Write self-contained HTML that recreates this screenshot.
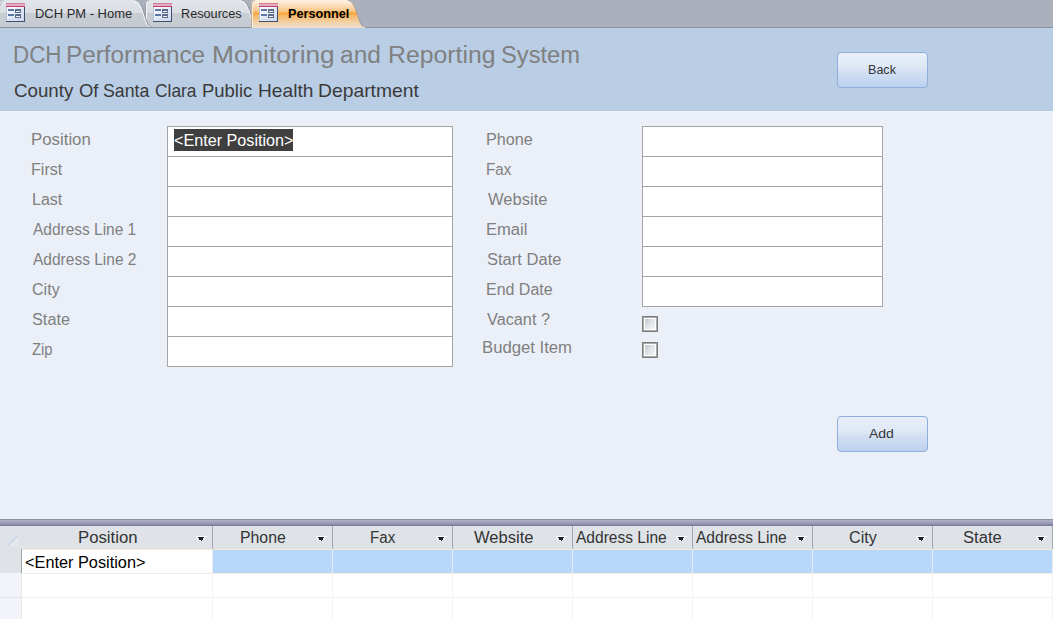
<!DOCTYPE html>
<html><head><meta charset="utf-8"><style>
html,body{margin:0;padding:0;}
body{width:1053px;height:619px;overflow:hidden;position:relative;background:#ebf0f8;font-family:"Liberation Sans",sans-serif;}
.a{position:absolute;}
.t{position:absolute;white-space:nowrap;transform-origin:0 0;}
</style></head><body>
<svg class="a" style="left:0;top:0" width="1053" height="28" viewBox="0 0 1053 28">
<defs>
<linearGradient id="gi" x1="0" y1="0" x2="0" y2="1">
<stop offset="0" stop-color="#e2e5e9"/><stop offset="0.46" stop-color="#dadde2"/>
<stop offset="0.47" stop-color="#c8ccd3"/><stop offset="1" stop-color="#c6cad1"/>
</linearGradient>
<linearGradient id="ga" x1="0" y1="0" x2="0" y2="1">
<stop offset="0" stop-color="#fcf0e2"/><stop offset="0.1" stop-color="#fce8d2"/>
<stop offset="0.4" stop-color="#f9c585"/><stop offset="0.48" stop-color="#f7a63a"/>
<stop offset="0.56" stop-color="#f6b868"/><stop offset="0.8" stop-color="#f1d2a8"/>
<stop offset="1" stop-color="#ece1cf"/>
</linearGradient>
<linearGradient id="gic" x1="0" y1="0" x2="1" y2="1">
<stop offset="0" stop-color="#ffffff"/><stop offset="1" stop-color="#c9d6f0"/>
</linearGradient>

</defs>
<rect x="0" y="0" width="1053" height="27" fill="#aab1bd"/>
<rect x="0" y="27" width="1053" height="1" fill="#8b919b"/>
<!-- tab 2 -->
<path d="M145,28 L145,3.5 Q145,0 149,0 L242,0 C246,0 248,5 250.5,13 C253,21 255,27.5 260,27.5 L260,28 Z" fill="url(#gi)"/>
<path d="M145.5,27 L145.5,4 Q145.5,0.5 149,0.5" fill="none" stroke="#979da6" stroke-width="1"/>
<path d="M146.5,27 L146.5,4 Q146.5,1.5 150,1.5" fill="none" stroke="#f2f4f6" stroke-width="1"/>
<path d="M242,0.5 C246,0.5 248,5.5 250.5,13 C253,21 255,27.5 260,27.5" fill="none" stroke="#8c939d" stroke-width="1"/>
<path d="M241,1.5 C245,1.5 247,6 249.5,13 C252,20 253,26 255,27" fill="none" stroke="#f4f5f7" stroke-width="1"/>
<!-- tab 1 -->
<path d="M0,28 L0,3 Q0,0 3,0 L135.5,0 C139.5,0 141.5,5 144,13 C146.5,21 148,27.5 153,27.5 L153,28 Z" fill="url(#gi)"/>
<path d="M0.5,6 Q0.5,0.5 4,0.5" fill="none" stroke="#b9bfc8" stroke-width="1"/>
<path d="M135.5,0.5 C139.5,0.5 141.5,5.5 144,13 C146.5,21 148,27.5 153,27.5" fill="none" stroke="#8c939d" stroke-width="1"/>
<path d="M134.5,1.5 C138.5,1.5 140.5,6 143,13.5 C145.5,21 146.5,26.5 150,27" fill="none" stroke="#f6f7f9" stroke-width="1"/>
<rect x="0" y="27" width="260" height="1" fill="#8b919b"/>
<!-- tab 3 active -->
<path d="M251,28 L251,3.5 Q251,0 255,0 L348,0 C352,0 354.5,5 357,13 C359.5,21 361,27.5 366,27.5 L366,28 Z" fill="url(#ga)"/>
<path d="M251.5,28 L251.5,4 Q251.5,0.5 255,0.5" fill="none" stroke="#b9ab98" stroke-width="1"/>
<path d="M348,0.5 C352,0.5 354.5,5.5 357,13 C359.5,21 361,27.5 366,27.5" fill="none" stroke="#9c9a98" stroke-width="1"/>
<path d="M252.5,27 L252.5,4 Q252.5,1.5 256,1.5" fill="none" stroke="#fbeedd" stroke-width="1"/>
<rect x="252" y="27" width="113" height="1" fill="#ebdfcc"/>
<g transform="translate(6,3)">
<rect x="0" y="4" width="19" height="15" fill="#3e506e"/>
<rect x="0" y="4" width="18" height="14" fill="#b9c4d6"/>
<rect x="1" y="4" width="17" height="14" fill="url(#gic)"/>
<rect x="0" y="0" width="19" height="1" fill="#d27f9f"/>
<rect x="0" y="1" width="19" height="2" fill="#e3adc0"/>
<rect x="0" y="3" width="19" height="1" fill="#c43f6e"/>
<rect x="2" y="6" width="6" height="2" fill="#5b76a7"/>
<rect x="9" y="6" width="6" height="4" fill="#5d6e8c"/>
<rect x="10" y="8" width="4" height="1" fill="#eef1f6"/>
<rect x="2" y="11" width="6" height="2" fill="#5b76a7"/>
<rect x="9" y="11" width="6" height="4" fill="#5d6e8c"/>
<rect x="10" y="13" width="4" height="1" fill="#eef1f6"/>
<rect x="2" y="16" width="14" height="1" fill="#d5dbe6"/>
</g>
<g transform="translate(153,3)">
<rect x="0" y="4" width="19" height="15" fill="#3e506e"/>
<rect x="0" y="4" width="18" height="14" fill="#b9c4d6"/>
<rect x="1" y="4" width="17" height="14" fill="url(#gic)"/>
<rect x="0" y="0" width="19" height="1" fill="#d27f9f"/>
<rect x="0" y="1" width="19" height="2" fill="#e3adc0"/>
<rect x="0" y="3" width="19" height="1" fill="#c43f6e"/>
<rect x="2" y="6" width="6" height="2" fill="#5b76a7"/>
<rect x="9" y="6" width="6" height="4" fill="#5d6e8c"/>
<rect x="10" y="8" width="4" height="1" fill="#eef1f6"/>
<rect x="2" y="11" width="6" height="2" fill="#5b76a7"/>
<rect x="9" y="11" width="6" height="4" fill="#5d6e8c"/>
<rect x="10" y="13" width="4" height="1" fill="#eef1f6"/>
<rect x="2" y="16" width="14" height="1" fill="#d5dbe6"/>
</g>
<g transform="translate(259,3)">
<rect x="0" y="4" width="19" height="15" fill="#3e506e"/>
<rect x="0" y="4" width="18" height="14" fill="#b9c4d6"/>
<rect x="1" y="4" width="17" height="14" fill="url(#gic)"/>
<rect x="0" y="0" width="19" height="1" fill="#d27f9f"/>
<rect x="0" y="1" width="19" height="2" fill="#e3adc0"/>
<rect x="0" y="3" width="19" height="1" fill="#c43f6e"/>
<rect x="2" y="6" width="6" height="2" fill="#5b76a7"/>
<rect x="9" y="6" width="6" height="4" fill="#5d6e8c"/>
<rect x="10" y="8" width="4" height="1" fill="#eef1f6"/>
<rect x="2" y="11" width="6" height="2" fill="#5b76a7"/>
<rect x="9" y="11" width="6" height="4" fill="#5d6e8c"/>
<rect x="10" y="13" width="4" height="1" fill="#eef1f6"/>
<rect x="2" y="16" width="14" height="1" fill="#d5dbe6"/>
</g>
</svg>
<!-- form header -->
<div class="a" style="left:0;top:28px;width:1053px;height:82px;background:#b9cde5"></div>
<div class="a" style="left:0;top:110px;width:1053px;height:1px;background:#b3c8e2"></div>
<div class="a" style="left:0;top:111px;width:1053px;height:1px;background:#f1f4fa"></div>
<!-- detail -->
<div class="a" style="left:0;top:112px;width:1053px;height:407px;background:#ebf0f8"></div>
<!-- buttons -->
<div class="a" style="left:837px;top:52px;width:89px;height:34px;border:1px solid #8eaedb;border-radius:4px;background:linear-gradient(#e9eff9,#dfe8f6 40%,#d0def3 60%,#bcd1ef)"></div>
<div class="a" style="left:837px;top:416px;width:89px;height:34px;border:1px solid #8eaedb;border-radius:4px;background:linear-gradient(#e9eff9,#dfe8f6 40%,#d0def3 60%,#bcd1ef)"></div>
<!-- left textboxes -->
<div class="a" style="left:167px;top:126px;width:284px;height:239px;border:1px solid #a5a5a5;background:#fff"></div>
<div class="a" style="left:168px;top:156px;width:284px;height:1px;background:#a5a5a5"></div>
<div class="a" style="left:168px;top:186px;width:284px;height:1px;background:#a5a5a5"></div>
<div class="a" style="left:168px;top:216px;width:284px;height:1px;background:#a5a5a5"></div>
<div class="a" style="left:168px;top:246px;width:284px;height:1px;background:#a5a5a5"></div>
<div class="a" style="left:168px;top:276px;width:284px;height:1px;background:#a5a5a5"></div>
<div class="a" style="left:168px;top:306px;width:284px;height:1px;background:#a5a5a5"></div>
<div class="a" style="left:168px;top:336px;width:284px;height:1px;background:#a5a5a5"></div>
<div class="a" style="left:174px;top:129px;width:119px;height:22px;background:#3f3f3f"></div>
<!-- right textboxes -->
<div class="a" style="left:642px;top:126px;width:239px;height:179px;border:1px solid #a5a5a5;background:#fff"></div>
<div class="a" style="left:643px;top:156px;width:239px;height:1px;background:#a5a5a5"></div>
<div class="a" style="left:643px;top:186px;width:239px;height:1px;background:#a5a5a5"></div>
<div class="a" style="left:643px;top:216px;width:239px;height:1px;background:#a5a5a5"></div>
<div class="a" style="left:643px;top:246px;width:239px;height:1px;background:#a5a5a5"></div>
<div class="a" style="left:643px;top:276px;width:239px;height:1px;background:#a5a5a5"></div>
<!-- checkboxes -->
<div class="a" style="left:642px;top:316px;width:14px;height:14px;border:1px solid #7c7c7c;box-shadow:inset 0 0 0 1px #a9a9a9;background:#fff"></div>
<div class="a" style="left:645px;top:319px;width:10px;height:10px;background:linear-gradient(135deg,#bfc4cb,#dfe2e6 45%,#f4f5f6)"></div>
<div class="a" style="left:642px;top:342px;width:14px;height:14px;border:1px solid #7c7c7c;box-shadow:inset 0 0 0 1px #a9a9a9;background:#fff"></div>
<div class="a" style="left:645px;top:345px;width:10px;height:10px;background:linear-gradient(135deg,#bfc4cb,#dfe2e6 45%,#f4f5f6)"></div>
<!-- datasheet -->
<div class="a" style="left:0;top:519px;width:1053px;height:1px;background:#8d9097"></div>
<div class="a" style="left:0;top:520px;width:1053px;height:6px;background:linear-gradient(#aeb0c6,#9c9eb8 50%,#78799a)"></div>
<div class="a" style="left:0;top:526px;width:1053px;height:93px;background:#fff"></div>
<div class="a" style="left:0;top:526px;width:1053px;height:23px;background:#dfe3e8"></div>
<div class="a" style="left:0;top:549px;width:21px;height:24px;background:#dfe3e8"></div>
<div class="a" style="left:0;top:573px;width:21px;height:46px;background:#f2f4fa"></div>
<div class="a" style="left:0;top:597px;width:21px;height:1px;background:#e1e4ea"></div>
<div class="a" style="left:21px;top:549px;width:1px;height:24px;background:#a0a4ab"></div>
<div class="a" style="left:21px;top:573px;width:1px;height:46px;background:#e6e8ec"></div>
<div class="a" style="left:213px;top:550px;width:840px;height:23px;background:#b7d8fb"></div>
<div class="a" style="left:22px;top:549px;width:1031px;height:1px;background:#f2ead8"></div>
<div class="a" style="left:22px;top:573px;width:1031px;height:1px;background:#efebdf"></div>
<div class="a" style="left:22px;top:597px;width:1031px;height:1px;background:#f3f1e9"></div>
<svg class="a" style="left:0;top:526px" width="1053" height="93" viewBox="0 0 1053 93">
<path d="M7,20 L18,9 L18,20 Z" fill="#e6e9ee"/>
<path d="M7.5,20 L18,9.5" stroke="#a9c3ea" stroke-width="1"/>
<g fill="#a3a7ae">
<rect x="212" y="0" width="1" height="23"/><rect x="332" y="0" width="1" height="23"/><rect x="452" y="0" width="1" height="23"/>
<rect x="572" y="0" width="1" height="23"/><rect x="692" y="0" width="1" height="23"/><rect x="812" y="0" width="1" height="23"/>
<rect x="932" y="0" width="1" height="23"/><rect x="1052" y="0" width="1" height="23"/>
</g>
<g fill="#f6f4ee">
<rect x="212" y="47" width="1" height="46"/><rect x="332" y="47" width="1" height="46"/><rect x="452" y="47" width="1" height="46"/>
<rect x="572" y="47" width="1" height="46"/><rect x="692" y="47" width="1" height="46"/><rect x="812" y="47" width="1" height="46"/>
<rect x="932" y="47" width="1" height="46"/><rect x="1052" y="47" width="1" height="46"/>
</g>
<g fill="#e8ecf5">
<rect x="212" y="24" width="1" height="23"/><rect x="332" y="24" width="1" height="23"/><rect x="452" y="24" width="1" height="23"/>
<rect x="572" y="24" width="1" height="23"/><rect x="692" y="24" width="1" height="23"/><rect x="812" y="24" width="1" height="23"/>
<rect x="932" y="24" width="1" height="23"/><rect x="1052" y="24" width="1" height="23"/>
</g>
<g fill="#ffffff" opacity="0.9"><rect x="196" y="10" width="11" height="1"/><rect x="197" y="11" width="1" height="3"/><rect x="204" y="11" width="1" height="3"/><rect x="199" y="14" width="4" height="1"/><rect x="201" y="15" width="1" height="1"/><rect x="316" y="10" width="11" height="1"/><rect x="317" y="11" width="1" height="3"/><rect x="324" y="11" width="1" height="3"/><rect x="319" y="14" width="4" height="1"/><rect x="321" y="15" width="1" height="1"/><rect x="436" y="10" width="11" height="1"/><rect x="437" y="11" width="1" height="3"/><rect x="444" y="11" width="1" height="3"/><rect x="439" y="14" width="4" height="1"/><rect x="441" y="15" width="1" height="1"/><rect x="556" y="10" width="11" height="1"/><rect x="557" y="11" width="1" height="3"/><rect x="564" y="11" width="1" height="3"/><rect x="559" y="14" width="4" height="1"/><rect x="561" y="15" width="1" height="1"/><rect x="676" y="10" width="11" height="1"/><rect x="677" y="11" width="1" height="3"/><rect x="684" y="11" width="1" height="3"/><rect x="679" y="14" width="4" height="1"/><rect x="681" y="15" width="1" height="1"/><rect x="796" y="10" width="11" height="1"/><rect x="797" y="11" width="1" height="3"/><rect x="804" y="11" width="1" height="3"/><rect x="799" y="14" width="4" height="1"/><rect x="801" y="15" width="1" height="1"/><rect x="916" y="10" width="11" height="1"/><rect x="917" y="11" width="1" height="3"/><rect x="924" y="11" width="1" height="3"/><rect x="919" y="14" width="4" height="1"/><rect x="921" y="15" width="1" height="1"/><rect x="1036" y="10" width="11" height="1"/><rect x="1037" y="11" width="1" height="3"/><rect x="1044" y="11" width="1" height="3"/><rect x="1039" y="14" width="4" height="1"/><rect x="1041" y="15" width="1" height="1"/></g><g fill="#1a2330"><rect x="198" y="11" width="6" height="1"/><rect x="199" y="12" width="4" height="2"/><rect x="201" y="14" width="1" height="1"/><rect x="318" y="11" width="6" height="1"/><rect x="319" y="12" width="4" height="2"/><rect x="321" y="14" width="1" height="1"/><rect x="438" y="11" width="6" height="1"/><rect x="439" y="12" width="4" height="2"/><rect x="441" y="14" width="1" height="1"/><rect x="558" y="11" width="6" height="1"/><rect x="559" y="12" width="4" height="2"/><rect x="561" y="14" width="1" height="1"/><rect x="678" y="11" width="6" height="1"/><rect x="679" y="12" width="4" height="2"/><rect x="681" y="14" width="1" height="1"/><rect x="798" y="11" width="6" height="1"/><rect x="799" y="12" width="4" height="2"/><rect x="801" y="14" width="1" height="1"/><rect x="918" y="11" width="6" height="1"/><rect x="919" y="12" width="4" height="2"/><rect x="921" y="14" width="1" height="1"/><rect x="1038" y="11" width="6" height="1"/><rect x="1039" y="12" width="4" height="2"/><rect x="1041" y="14" width="1" height="1"/></g>
</svg>

<span class="t" style="left:34.52px;top:6px;font-size:13.2px;line-height:15px;color:#2b2b2b;font-weight:normal;transform:scaleX(0.9819)">DCH PM - Home</span>
<span class="t" style="left:181.24px;top:6px;font-size:13.2px;line-height:15px;color:#2b2b2b;font-weight:normal;transform:scaleX(0.9612)">Resources</span>
<span class="t" style="left:287.86px;top:6px;font-size:13.6px;line-height:15px;color:#000000;font-weight:bold;transform:scaleX(0.9331)">Personnel</span>
<span class="t" style="left:12.98px;top:41px;font-size:24.7px;line-height:27px;color:#808080;font-weight:normal;transform:scaleX(0.9077)">DCH</span>
<span class="t" style="left:66.43px;top:41px;font-size:24.7px;line-height:27px;color:#808080;font-weight:normal;transform:scaleX(0.9844)">Performance</span>
<span class="t" style="left:211.57px;top:41px;font-size:24.7px;line-height:27px;color:#808080;font-weight:normal;transform:scaleX(1.0645)">Monitoring</span>
<span class="t" style="left:340.31px;top:41px;font-size:24.7px;line-height:27px;color:#808080;font-weight:normal;transform:scaleX(0.9929)">and</span>
<span class="t" style="left:387.69px;top:41px;font-size:24.7px;line-height:27px;color:#808080;font-weight:normal;transform:scaleX(1.0042)">Reporting</span>
<span class="t" style="left:500.64px;top:41px;font-size:24.7px;line-height:27px;color:#808080;font-weight:normal;transform:scaleX(0.9602)">System</span>
<span class="t" style="left:13.78px;top:80px;font-size:18.4px;line-height:21px;color:#3a3a3a;font-weight:normal;transform:scaleX(1.0174)">County</span>
<span class="t" style="left:78.60px;top:80px;font-size:18.4px;line-height:21px;color:#3a3a3a;font-weight:normal;transform:scaleX(1.0047)">Of</span>
<span class="t" style="left:102.63px;top:80px;font-size:18.4px;line-height:21px;color:#3a3a3a;font-weight:normal;transform:scaleX(0.9630)">Santa</span>
<span class="t" style="left:154.85px;top:80px;font-size:18.4px;line-height:21px;color:#3a3a3a;font-weight:normal;transform:scaleX(0.9435)">Clara</span>
<span class="t" style="left:202.29px;top:80px;font-size:18.4px;line-height:21px;color:#3a3a3a;font-weight:normal;transform:scaleX(1.0038)">Public</span>
<span class="t" style="left:257.54px;top:80px;font-size:18.4px;line-height:21px;color:#3a3a3a;font-weight:normal;transform:scaleX(1.0424)">Health</span>
<span class="t" style="left:317.53px;top:80px;font-size:18.4px;line-height:21px;color:#3a3a3a;font-weight:normal;transform:scaleX(1.0495)">Department</span>
<span class="t" style="left:867.77px;top:62px;font-size:13.4px;line-height:15px;color:#353535;font-weight:normal;transform:scaleX(0.9378)">Back</span>
<span class="t" style="left:869.20px;top:426px;font-size:13.4px;line-height:15px;color:#353535;font-weight:normal;transform:scaleX(1.0439)">Add</span>
<span class="t" style="left:31.43px;top:131px;font-size:16px;line-height:17px;color:#7f7f7f;font-weight:normal;transform:scaleX(1.0508)">Position</span>
<span class="t" style="left:31.49px;top:161px;font-size:16px;line-height:17px;color:#7f7f7f;font-weight:normal;transform:scaleX(1.0082)">First</span>
<span class="t" style="left:31.50px;top:191px;font-size:16px;line-height:17px;color:#7f7f7f;font-weight:normal;transform:scaleX(1.0001)">Last</span>
<span class="t" style="left:32.80px;top:221px;font-size:16px;line-height:17px;color:#7f7f7f;font-weight:normal;transform:scaleX(0.9667)">Address Line 1</span>
<span class="t" style="left:32.80px;top:251px;font-size:16px;line-height:17px;color:#7f7f7f;font-weight:normal;transform:scaleX(0.9695)">Address Line 2</span>
<span class="t" style="left:32.00px;top:281px;font-size:16px;line-height:17px;color:#7f7f7f;font-weight:normal;transform:scaleX(1.0054)">City</span>
<span class="t" style="left:32.09px;top:311px;font-size:16px;line-height:17px;color:#7f7f7f;font-weight:normal;transform:scaleX(1.0178)">State</span>
<span class="t" style="left:32.34px;top:341px;font-size:16px;line-height:17px;color:#7f7f7f;font-weight:normal;transform:scaleX(0.9277)">Zip</span>
<span class="t" style="left:486.18px;top:131px;font-size:16px;line-height:17px;color:#7f7f7f;font-weight:normal;transform:scaleX(1.0120)">Phone</span>
<span class="t" style="left:486.27px;top:161px;font-size:16px;line-height:17px;color:#7f7f7f;font-weight:normal;transform:scaleX(0.9457)">Fax</span>
<span class="t" style="left:487.50px;top:191px;font-size:16px;line-height:17px;color:#7f7f7f;font-weight:normal;transform:scaleX(1.0350)">Website</span>
<span class="t" style="left:486.15px;top:221px;font-size:16px;line-height:17px;color:#7f7f7f;font-weight:normal;transform:scaleX(1.0358)">Email</span>
<span class="t" style="left:486.78px;top:251px;font-size:16px;line-height:17px;color:#7f7f7f;font-weight:normal;transform:scaleX(1.0335)">Start Date</span>
<span class="t" style="left:486.20px;top:281px;font-size:16px;line-height:17px;color:#7f7f7f;font-weight:normal;transform:scaleX(0.9983)">End Date</span>
<span class="t" style="left:487.30px;top:311px;font-size:16px;line-height:17px;color:#7f7f7f;font-weight:normal;transform:scaleX(1.0168)">Vacant ?</span>
<span class="t" style="left:482.44px;top:339px;font-size:16px;line-height:17px;color:#7f7f7f;font-weight:normal;transform:scaleX(1.0435)">Budget Item</span>
<span class="t" style="left:173.79px;top:132px;font-size:16px;line-height:17px;color:#ffffff;font-weight:normal;transform:scaleX(1.0098)">&lt;Enter Position&gt;</span>
<span class="t" style="left:77.84px;top:529px;font-size:16px;line-height:17px;color:#333333;font-weight:normal;transform:scaleX(1.0472)">Position</span>
<span class="t" style="left:239.71px;top:529px;font-size:16px;line-height:17px;color:#333333;font-weight:normal;transform:scaleX(0.9894)">Phone</span>
<span class="t" style="left:370.47px;top:529px;font-size:16px;line-height:17px;color:#333333;font-weight:normal;transform:scaleX(0.9457)">Fax</span>
<span class="t" style="left:473.50px;top:529px;font-size:16px;line-height:17px;color:#333333;font-weight:normal;transform:scaleX(1.0350)">Website</span>
<span class="t" style="left:576.10px;top:529px;font-size:16px;line-height:17px;color:#333333;font-weight:normal;transform:scaleX(0.9710)">Address Line</span>
<span class="t" style="left:696.20px;top:529px;font-size:16px;line-height:17px;color:#333333;font-weight:normal;transform:scaleX(0.9710)">Address Line</span>
<span class="t" style="left:848.99px;top:529px;font-size:16px;line-height:17px;color:#333333;font-weight:normal;transform:scaleX(1.0092)">City</span>
<span class="t" style="left:963.47px;top:529px;font-size:16px;line-height:17px;color:#333333;font-weight:normal;transform:scaleX(1.0372)">State</span>
<span class="t" style="left:24.59px;top:554px;font-size:16px;line-height:17px;color:#000000;font-weight:normal;transform:scaleX(1.0184)">&lt;Enter Position&gt;</span>
</body></html>
